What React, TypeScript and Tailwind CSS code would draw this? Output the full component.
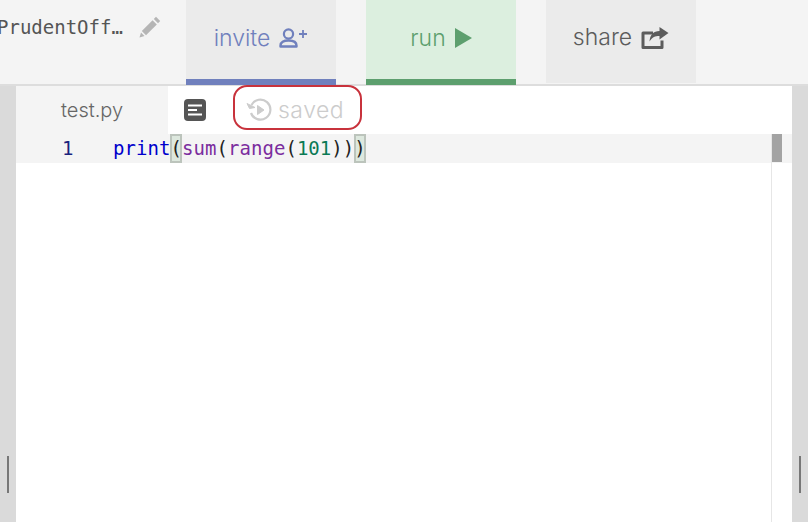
import React from "react";

const uiFont = "font-['Inter','Lato',sans-serif] font-light";
const monoFont = "font-['DejaVu_Sans_Mono','Liberation_Mono',monospace] font-normal";

const PencilIcon = () => (
  <svg width="22" height="22" viewBox="0 0 22 22" fill="#b5b5b5">
    <path d="M17 .8 21.200 5 19 7.200 14.800 3z" />
    <path d="M13.600 4.200 17.800 8.400 7 19.200 2.800 15z" />
    <path d="M2 16.500 5.500 20 .5 21.500z" />
  </svg>
);

const InviteIcon = () => (
  <svg width="29" height="20" viewBox="0 0 29 20" fill="none" stroke="currentColor">
    <circle cx="9.500" cy="6" r="4.600" strokeWidth="2.200" />
    <path d="M1.500 18.500v-1c0-3.500 3-5 8-5s8 1.500 8 5v1z" strokeWidth="2.400" strokeLinejoin="round" />
    <path d="M20 6h8M24 2v8" strokeWidth="1.800" />
  </svg>
);

const PlayIcon = () => (
  <svg width="17" height="20" viewBox="0 0 17 20" fill="currentColor">
    <path d="M0 0 17 10 0 20z" />
  </svg>
);

const ShareIcon = () => (
  <svg width="28" height="22" viewBox="0 0 28 22" fill="none">
    <path d="M12 6H2v14.500h19v-7" stroke="currentColor" strokeWidth="3" strokeLinejoin="round" />
    <path d="M18.500 0 27.500 6l-9 6.500V9c-4.500 0-7 1-10 5.500C9 8 12.500 4 18.500 4z" fill="currentColor" />
  </svg>
);

const NotesIcon = () => (
  <svg width="22" height="22" viewBox="0 0 22 22">
    <rect width="22" height="22" rx="4" fill="#555555" />
    <path d="M4 6.500h14M4 11h9M4 15.500h14" stroke="#ffffff" strokeWidth="2" />
  </svg>
);

const RestoreIcon = () => (
  <svg width="26" height="24" viewBox="0 0 26 24" fill="none" stroke="#cccccc">
    <path d="M5.500 7a10 10 0 1 1-.5 8" strokeWidth="2.200" />
    <path d="M1 5.500 3.500 10.500 9 9.500z" fill="#cccccc" strokeWidth="1" />
    <path d="M11.500 7.500 18 12l-6.500 4.500z" fill="#cccccc" strokeWidth="1" />
  </svg>
);

const ActionButton = ({
  label,
  icon,
  className,
}: {
  label: string;
  icon: React.ReactNode;
  className: string;
}) => (
  <div className={`flex w-[150px] items-center justify-center gap-[9px] text-[23px] ${className}`}>
    <span>{label}</span>
    {icon}
  </div>
);

const Bracket = ({ children }: { children: string }) => (
  <span className="inline-block h-[29px] w-[11.5px] border-2 border-[#bcc4bc] bg-[#dde8de] text-center leading-[25px] text-[#222222]">
    <span className="-mx-1 inline-block">{children}</span>
  </span>
);

const Rail = () => (
  <div className="flex w-4 shrink-0 items-end justify-center bg-[#dadada] pb-[29px]">
    <div className="h-[37px] w-[2px] bg-[#777777]" />
  </div>
);

export default function App() {
  return (
    <div className={`flex h-[522px] w-[808px] flex-col overflow-hidden bg-[#f4f4f4] ${uiFont}`}>
      <header className="flex h-[86px] shrink-0 border-b-2 border-[#dddddd]">
        <div className="w-[186px] shrink-0 overflow-hidden pt-[15px]">
          <div className="-ml-[3px] flex items-center">
            <span className={`${monoFont} text-[19px] leading-[24px] text-[#555555]`}>PrudentOff…</span>
            <span className="ml-[16px]">
              <PencilIcon />
            </span>
          </div>
          <div className={`${monoFont} -ml-[10px] mt-[3px] text-[16px] leading-[20px] text-[#666666]`}>n</div>
        </div>
        <div className="flex items-start">
          <ActionButton
            label="invite"
            icon={<InviteIcon />}
            className="h-[85px] border-b-[6px] border-[#7080bd] bg-[#ebebeb] pb-[3px] text-[#7080bd]"
          />
          <ActionButton
            label="run"
            icon={<PlayIcon />}
            className="ml-[30px] h-[85px] border-b-[6px] border-[#5d9f6e] bg-[#dcefdf] pb-[3px] text-[#5d9f6e]"
          />
          <ActionButton
            label="share"
            icon={<ShareIcon />}
            className="ml-[30px] h-[83px] bg-[#ebebeb] pb-[8px] text-[#5c5c5c]"
          />
        </div>
      </header>
      <main className="flex min-h-0 flex-1">
        <Rail />
        <div className="flex min-w-0 flex-1 flex-col bg-white">
          <div className="flex h-[48px] shrink-0">
            <div className="flex w-[152px] items-center bg-[#f4f4f4] pb-[1px] pl-[45px] text-[20px] text-[#666666]">
              test.py
            </div>
            <div className="ml-4 flex items-center">
              <NotesIcon />
            </div>
            <div className="-mt-[1px] ml-[27px] flex h-[45px] w-[129px] items-center gap-[6px] rounded-[14px] border-2 border-[#c8323c] pl-[11px] pt-[5px] text-[23px] tracking-[0.5px] text-[#cccccc]">
              <RestoreIcon />
              <span>saved</span>
            </div>
          </div>
          <div className="flex min-h-0 flex-1">
            <div className="flex min-w-0 flex-1 flex-col">
              <div className={`flex h-[29px] bg-[#f4f4f4] ${monoFont} text-[19px] leading-[29px] tracking-[0.05px]`}>
                <span className="ml-[46px] w-[51px] text-[#1a237e]">1</span>
                <span className="whitespace-pre">
                  <span className="text-[#0000cc]">print</span>
                  <Bracket>(</Bracket>
                  <span className="text-[#7b2d9e]">sum</span>
                  <span className="text-[#222222]">(</span>
                  <span className="text-[#7b2d9e]">range</span>
                  <span className="text-[#222222]">(</span>
                  <span className="text-[#0a7a55]">101</span>
                  <span className="text-[#222222]">))</span>
                  <Bracket>)</Bracket>
                </span>
              </div>
            </div>
            <div className="w-[21px] shrink-0 border-l border-[#e6e6e6]">
              <div className="flex h-[29px] bg-[#f4f4f4]">
                <div className="h-[28px] w-[10px] bg-[#a3a3a3]" />
              </div>
            </div>
          </div>
        </div>
        <Rail />
      </main>
    </div>
  );
}
